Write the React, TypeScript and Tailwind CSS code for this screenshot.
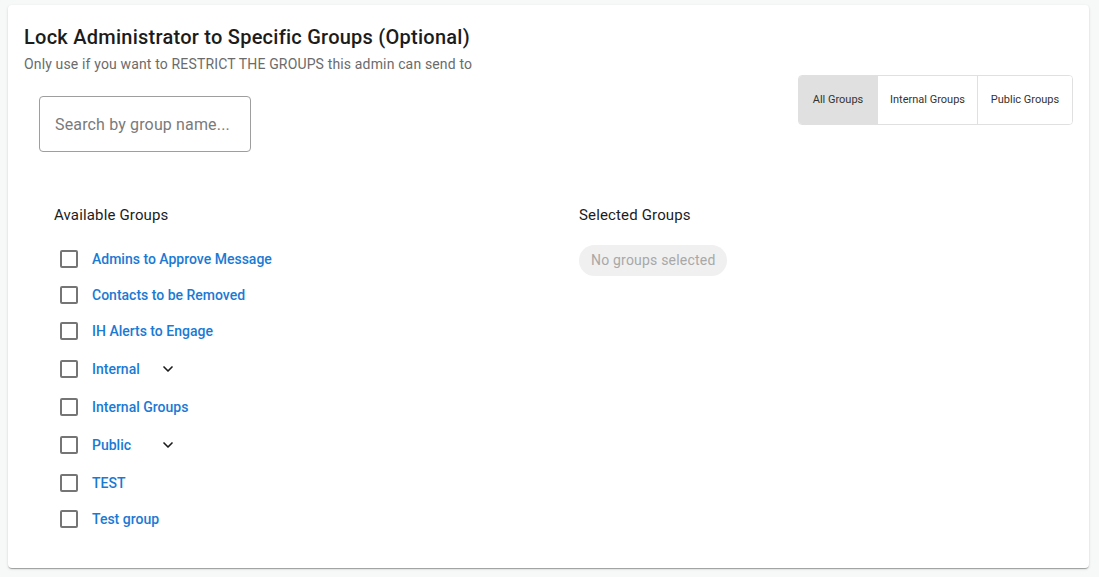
import { ChevronDown } from 'lucide-react';

const groups = [
  { name: 'Admins to Approve Message', expandable: false },
  { name: 'Contacts to be Removed', expandable: false },
  { name: 'IH Alerts to Engage', expandable: false },
  { name: 'Internal', expandable: true },
  { name: 'Internal Groups', expandable: false },
  { name: 'Public', expandable: true },
  { name: 'TEST', expandable: false },
  { name: 'Test group', expandable: false },
];

export default function App() {
  return (
    <div className="min-h-[577px] bg-[#f7f8f8] pt-[5px] pl-2 pr-[10px] font-['Roboto',sans-serif]">
      <div className="h-[563px] rounded bg-white shadow-[0_2px_1px_-1px_rgba(0,0,0,0.2),0_1px_1px_0_rgba(0,0,0,0.14),0_1px_3px_0_rgba(0,0,0,0.12)] px-4 pt-[19px]">
        {/* Header */}
        <h2 className="text-[20px] font-medium leading-[26px] text-[#1c1c1c] tracking-[0.25px]">
          Lock Administrator to Specific Groups (Optional)
        </h2>
        <p className="text-[14px] leading-5 text-[#6b6b6b] mt-[4px] tracking-[0.15px]">
          Only use if you want to RESTRICT THE GROUPS this admin can send to
        </p>

        <div className="flex items-start justify-between">
          <div className="pl-[15px] pt-[22px]">
            <input
              placeholder="Search by group name..."
              className="w-[212px] h-[56px] rounded border border-[#9e9e9e] px-[15px] text-[16px] tracking-[0.15px] text-[#333] placeholder:text-[#7a7a7a] outline-none"
            />
          </div>
          <div className="flex mt-[1px] h-[50px] rounded border border-[#e0e0e0] overflow-hidden text-[11px] text-[#333]">
            <button className="w-[78px] bg-[#e0e0e0]">All Groups</button>
            <button className="w-[100px] border-l border-[#e0e0e0] bg-white">Internal Groups</button>
            <button className="w-[95px] border-l border-[#e0e0e0] bg-white">Public Groups</button>
          </div>
        </div>

        {/* Lists */}
        <div className="grid grid-cols-[525px_1fr] pl-[30px] pt-[53px]">
          <div>
            <h3 className="text-[15px] leading-5 text-[#1c1c1c] tracking-[0.15px]">Available Groups</h3>
            <ul className="mt-[16px]">
              {groups.map((g) => (
                <li
                  key={g.name}
                  className={`flex items-center ${g.expandable ? 'h-[40px]' : 'h-[36px]'}`}
                >
                  <span className="ml-[6px] w-[18px] h-[18px] rounded-[2px] border-2 border-[#757575]" />
                  <span className="ml-[14px] text-[14px] font-medium text-[#1a7ad4]">{g.name}</span>
                  {g.expandable && (
                    <ChevronDown
                      className="w-4 h-4 text-[#1c1c1c]"
                      style={{ marginLeft: g.name === 'Internal' ? 20 : 29 }}
                      strokeWidth={2.5}
                    />
                  )}
                </li>
              ))}
            </ul>
          </div>
          <div>
            <h3 className="text-[15px] leading-5 text-[#1c1c1c] tracking-[0.15px]">Selected Groups</h3>
            <div className="mt-[20px] inline-flex items-center h-[31px] px-3 rounded-full bg-[#f0f0f0] text-[14px] tracking-[0.2px] text-[#a8a8a8]">
              No groups selected
            </div>
          </div>
        </div>
      </div>
    </div>
  );
}
